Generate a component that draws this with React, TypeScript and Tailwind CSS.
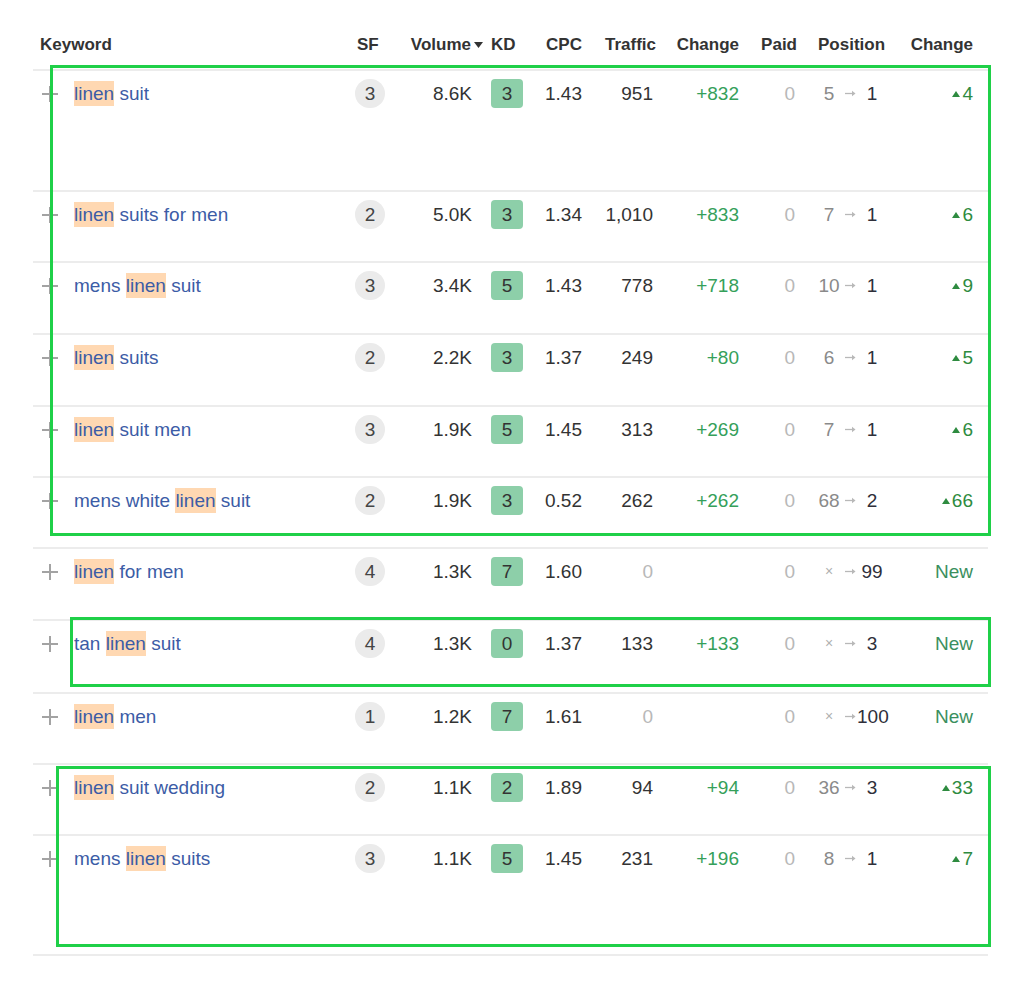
import React from "react";

type Part = [string, boolean];
type Row = {
  kw: Part[];
  sf: string;
  vol: string;
  kd: string;
  cpc: string;
  traffic: string;
  change: string;
  paid: string;
  from: string;
  to: string;
  delta: string;
  h: string;
};

const rows: Row[] = [
  { kw: [["linen", true], [" suit", false]], sf: "3", vol: "8.6K", kd: "3", cpc: "1.43", traffic: "951", change: "+832", paid: "0", from: "5", to: "1", delta: "4", h: "h-[121px]" },
  { kw: [["linen", true], [" suits for men", false]], sf: "2", vol: "5.0K", kd: "3", cpc: "1.34", traffic: "1,010", change: "+833", paid: "0", from: "7", to: "1", delta: "6", h: "h-[71px]" },
  { kw: [["mens ", false], ["linen", true], [" suit", false]], sf: "3", vol: "3.4K", kd: "5", cpc: "1.43", traffic: "778", change: "+718", paid: "0", from: "10", to: "1", delta: "9", h: "h-[72px]" },
  { kw: [["linen", true], [" suits", false]], sf: "2", vol: "2.2K", kd: "3", cpc: "1.37", traffic: "249", change: "+80", paid: "0", from: "6", to: "1", delta: "5", h: "h-[72px]" },
  { kw: [["linen", true], [" suit men", false]], sf: "3", vol: "1.9K", kd: "5", cpc: "1.45", traffic: "313", change: "+269", paid: "0", from: "7", to: "1", delta: "6", h: "h-[71px]" },
  { kw: [["mens white ", false], ["linen", true], [" suit", false]], sf: "2", vol: "1.9K", kd: "3", cpc: "0.52", traffic: "262", change: "+262", paid: "0", from: "68", to: "2", delta: "66", h: "h-[71px]" },
  { kw: [["linen", true], [" for men", false]], sf: "4", vol: "1.3K", kd: "7", cpc: "1.60", traffic: "0", change: "", paid: "0", from: "×", to: "99", delta: "New", h: "h-[72px]" },
  { kw: [["tan ", false], ["linen", true], [" suit", false]], sf: "4", vol: "1.3K", kd: "0", cpc: "1.37", traffic: "133", change: "+133", paid: "0", from: "×", to: "3", delta: "New", h: "h-[73px]" },
  { kw: [["linen", true], [" men", false]], sf: "1", vol: "1.2K", kd: "7", cpc: "1.61", traffic: "0", change: "", paid: "0", from: "×", to: "100", delta: "New", h: "h-[71px]" },
  { kw: [["linen", true], [" suit wedding", false]], sf: "2", vol: "1.1K", kd: "2", cpc: "1.89", traffic: "94", change: "+94", paid: "0", from: "36", to: "3", delta: "33", h: "h-[71px]" },
  { kw: [["mens ", false], ["linen", true], [" suits", false]], sf: "3", vol: "1.1K", kd: "5", cpc: "1.45", traffic: "231", change: "+196", paid: "0", from: "8", to: "1", delta: "7", h: "h-[122px] border-b-2" },
];

const grid =
  "grid grid-cols-[41px_281px_30px_99px_46px_52px_74px_83px_58px_111px_65px]";

function Plus() {
  return (
    <svg width="16" height="16" viewBox="0 0 16 16">
      <path d="M0 8H16M8 0V16" stroke="#a3a3a3" strokeWidth="2" />
    </svg>
  );
}

function Caret() {
  return (
    <svg width="9" height="6" viewBox="0 0 9 6">
      <path d="M0 0H9L4.5 6Z" fill="#333" />
    </svg>
  );
}

function Up() {
  return (
    <svg width="8" height="6" viewBox="0 0 8 6">
      <path d="M0 6H8L4 0Z" fill="#2e8b40" />
    </svg>
  );
}

function Arrow() {
  return (
    <svg width="11" height="7" viewBox="0 0 11 7">
      <path d="M0 3.5H8" stroke="#b8b8b8" strokeWidth="1.3" />
      <path d="M7 0.8L10.5 3.5L7 6.2Z" fill="#b8b8b8" />
    </svg>
  );
}

export default function App() {
  return (
    <div
      className="relative w-[1024px] h-[1002px] bg-white text-[#333]"
      style={{ fontFamily: '"Liberation Sans", Arial, sans-serif' }}
    >
      <div className="ml-[33px] w-[955px]">
        {/* header */}
        <div className={`${grid} h-[69px] items-start pt-[33px] text-[17px] leading-[24px] font-bold text-[#333]`}>
          <div className="col-span-2 pl-[7px]">Keyword</div>
          <div className="pl-[2px]">SF</div>
          <div className="flex h-[24px] items-center justify-end gap-[3px] pr-[1px]">
            <span>Volume</span>
            <Caret />
          </div>
          <div className="pl-[7px]">KD</div>
          <div className="text-right">CPC</div>
          <div className="text-right">Traffic</div>
          <div className="text-right">Change</div>
          <div className="text-right">Paid</div>
          <div className="pl-[21px]">Position</div>
          <div className="text-right">Change</div>
        </div>

        {rows.map((r, i) => (
          <div
            key={i}
            className={`${grid} ${r.h} border-t-2 border-[#ececec] pt-[8px] text-[19px] leading-[29px] items-start`}
          >
            <div className="flex h-[29px] items-center pl-[9px]">
              <Plus />
            </div>
            <div className="whitespace-pre text-[#3c5ca6]">
              {r.kw.map(([t, hl], j) =>
                hl ? (
                  <span key={j} className="bg-[#ffd8b2] py-[2px]">
                    {t}
                  </span>
                ) : (
                  <span key={j}>{t}</span>
                )
              )}
            </div>
            <div className="flex h-[29px] w-[30px] items-center justify-center rounded-full bg-[#ebebeb] text-[#444]">
              {r.sf}
            </div>
            <div className="pr-[12px] text-right">{r.vol}</div>
            <div className="pl-[7px]">
              <div className="flex h-[29px] w-[32px] items-center justify-center rounded-[4px] bg-[#8dcfa9] text-[#333]">
                {r.kd}
              </div>
            </div>
            <div className="text-right">{r.cpc}</div>
            <div className={`pr-[3px] text-right ${r.traffic === "0" ? "text-[#b8b8b8]" : ""}`}>
              {r.traffic}
            </div>
            <div className="text-right text-[#35a05a]">{r.change}</div>
            <div className="pr-[2px] text-right text-[#b8b8b8]">{r.paid}</div>
            <div className="flex h-[29px] items-center pl-[18px]">
              {r.from === "×" ? (
                <span className="w-[28px] text-center text-[14px] text-[#b0b0b0]">×</span>
              ) : (
                <span className="w-[28px] text-center text-[19px] text-[#8a8a8a]">{r.from}</span>
              )}
              <span className="flex w-[14px] justify-center">
                <Arrow />
              </span>
              <span className="w-[30px] text-center text-[19px] text-[#2f2f3a]">{r.to}</span>
            </div>
            <div className="flex h-[29px] items-center justify-end gap-[2px]">
              {r.delta === "New" ? (
                <span className="text-[#3b8f5e]">New</span>
              ) : (
                <>
                  <Up />
                  <span className="text-[#2e8b40]">{r.delta}</span>
                </>
              )}
            </div>
          </div>
        ))}
      </div>

      {/* annotation boxes */}
      <div className="pointer-events-none absolute left-[50px] top-[65px] h-[471px] w-[941px] border-[3px] border-[#1fd048]" />
      <div className="pointer-events-none absolute left-[70px] top-[617px] h-[70px] w-[921px] border-[3px] border-[#1fd048]" />
      <div className="pointer-events-none absolute left-[56px] top-[766px] h-[181px] w-[935px] border-[3px] border-[#1fd048]" />
    </div>
  );
}
